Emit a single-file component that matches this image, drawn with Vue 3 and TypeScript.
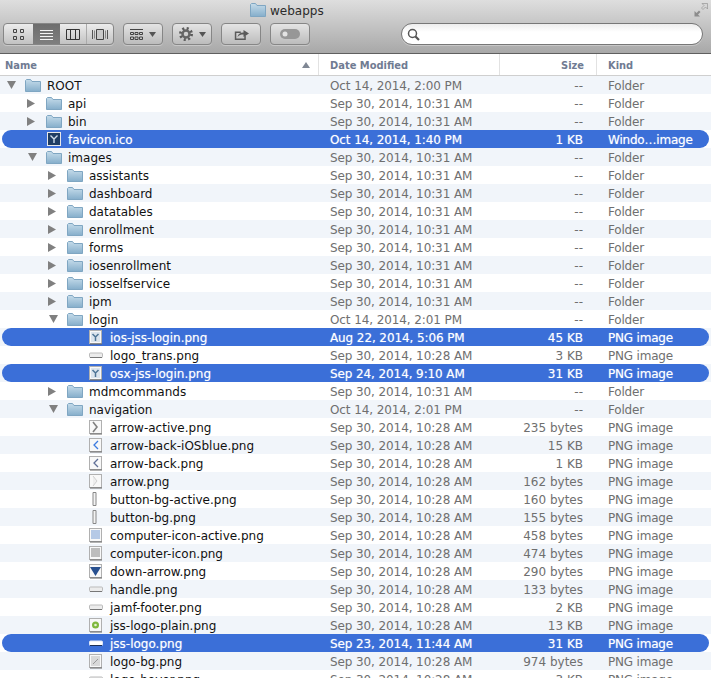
<script setup lang="ts">
interface Row {
  name: string;
  depth: number;
  icon: string;
  twisty?: "open" | "closed";
  date: string;
  size: string;
  kind: string;
  selected?: boolean;
}

const SEP31 = "Sep 30, 2014, 10:31 AM";
const SEP28 = "Sep 30, 2014, 10:28 AM";

const folder = (name: string, depth: number, twisty: "open" | "closed", date = SEP31): Row => ({
  name, depth, twisty, date, icon: "folder", size: "--", kind: "Folder",
});
const png = (name: string, icon: string, size: string, date = SEP28, selected = false): Row => ({
  name, depth: 3, icon, size, date, selected, kind: "PNG image",
});

const rows: Row[] = [
  folder("ROOT", 0, "open", "Oct 14, 2014, 2:00 PM"),
  folder("api", 1, "closed"),
  folder("bin", 1, "closed"),
  { name: "favicon.ico", depth: 1, icon: "favicon", date: "Oct 14, 2014, 1:40 PM", size: "1 KB", kind: "Windo…image", selected: true },
  folder("images", 1, "open"),
  folder("assistants", 2, "closed"),
  folder("dashboard", 2, "closed"),
  folder("datatables", 2, "closed"),
  folder("enrollment", 2, "closed"),
  folder("forms", 2, "closed"),
  folder("iosenrollment", 2, "closed"),
  folder("iosselfservice", 2, "closed"),
  folder("ipm", 2, "closed"),
  folder("login", 2, "open", "Oct 14, 2014, 2:01 PM"),
  png("ios-jss-login.png", "jss", "45 KB", "Aug 22, 2014, 5:06 PM", true),
  png("logo_trans.png", "bar", "3 KB"),
  png("osx-jss-login.png", "jss", "31 KB", "Sep 24, 2014, 9:10 AM", true),
  folder("mdmcommands", 2, "closed"),
  folder("navigation", 2, "open", "Oct 14, 2014, 2:01 PM"),
  png("arrow-active.png", "chevron", "235 bytes"),
  png("arrow-back-iOSblue.png", "backblue", "15 KB"),
  png("arrow-back.png", "back", "1 KB"),
  png("arrow.png", "paleArrow", "162 bytes"),
  png("button-bg-active.png", "thin", "160 bytes"),
  png("button-bg.png", "thin", "155 bytes"),
  png("computer-icon-active.png", "computerBlue", "458 bytes"),
  png("computer-icon.png", "computer", "474 bytes"),
  png("down-arrow.png", "downArrow", "290 bytes"),
  png("handle.png", "bar", "133 bytes"),
  png("jamf-footer.png", "bar", "2 KB"),
  png("jss-logo-plain.png", "green", "13 KB"),
  png("jss-logo.png", "bar", "31 KB", "Sep 23, 2014, 11:44 AM", true),
  png("logo-bg.png", "logoBg", "974 bytes"),
  png("logo-hover.png", "bar", "3 KB"),
];

const framed = ["jss", "chevron", "backblue", "back", "paleArrow", "computerBlue", "computer", "downArrow", "green", "logoBg"];
</script>

<template>
  <div class="finder">
    <svg class="defs" width="0" height="0">
      <defs>
        <linearGradient id="fold" x1="0" y1="0" x2="0" y2="1">
          <stop offset="0" stop-color="#c6dcea" />
          <stop offset="1" stop-color="#85aecb" />
        </linearGradient>
      </defs>
    </svg>

    <header class="toolbar">
      <div class="title-row">
        <svg width="16" height="14" viewBox="0 0 16 14">
          <path d="M.5 13.500V1.500l1-1h4l1.500 2h8.500v11z" fill="url(#fold)" stroke="#7fa6c2" />
        </svg>
        <span class="title">webapps</span>
        <svg class="expand" width="14" height="14" viewBox="0 0 14 14">
          <path d="M13.500.5H8l2 2-2.500 2.500 1.500 1.500L11.500 4l2 2z" fill="#d6d6d6" stroke="#8c8c8c" stroke-width=".6" />
          <path d="M.5 13.500H6l-2-2L6.500 9 5 7.500 2.500 10l-2-2z" fill="#8c8c8c" />
        </svg>
      </div>
      <div class="controls">
        <div class="segments">
          <button class="seg seg-icons">
            <svg width="11" height="11" viewBox="0 0 11 11" fill="none" stroke="#444">
              <path d="M.5.5h3v3h-3zM7.500.5h3v3h-3zM.5 7.500h3v3h-3zM7.500 7.500h3v3h-3z" />
            </svg>
          </button>
          <button class="seg seg-list">
            <svg width="13" height="11" viewBox="0 0 13 11" stroke="#f4f4f4">
              <path d="M0 1.500h13M0 4.500h13M0 7.500h13M0 10.500h13" />
            </svg>
          </button>
          <button class="seg seg-cols">
            <svg width="14" height="11" viewBox="0 0 14 11" fill="none" stroke="#333">
              <path d="M.5.5h13v10H.5zM4.500.5v10M9.500.5v10" />
            </svg>
          </button>
          <button class="seg seg-flow">
            <svg width="16" height="11" viewBox="0 0 16 11" fill="none">
              <path d="M.5 1v9M15.500 1v9" stroke="#555" />
              <path d="M2.500 1.500v8M13.500 1.500v8" stroke="#888" />
              <path d="M4.500.5h7v10h-7z" stroke="#444" fill="#c9c9c9" />
            </svg>
          </button>
        </div>
        <button class="btn">
          <svg width="13" height="11" viewBox="0 0 13 11" fill="none" stroke="#444">
            <path d="M0 .5h13" />
            <path d="M.5 3.500h3v2h-3zM5 3.500h3v2H5zM9.500 3.500h3v2h-3zM.5 8h3v2.500h-3zM5 8h3v2.500H5zM9.500 8h3v2.500h-3z" />
          </svg>
          <svg class="caret" width="7" height="5" viewBox="0 0 7 5"><path d="M0 0h7L3.500 5z" fill="#555" /></svg>
        </button>
        <button class="btn">
          <svg width="14" height="14" viewBox="0 0 14 14" fill="none">
            <circle cx="7" cy="7" r="5.500" stroke="#5c5c5c" stroke-width="3" stroke-dasharray="2 2.320" />
            <circle cx="7" cy="7" r="3.500" stroke="#666" stroke-width="2.500" />
          </svg>
          <svg class="caret" width="7" height="5" viewBox="0 0 7 5"><path d="M0 0h7L3.500 5z" fill="#555" /></svg>
        </button>
        <button class="btn">
          <svg width="15" height="12" viewBox="0 0 15 12">
            <path d="M.8 3.500h6v1.500H2.300v5.500h8V7.500h1.500v4.500H.8z" fill="#5a5a5a" />
            <path d="M3.500 9c.5-3 2.500-4.500 6-4.500V2L15 5.500 9.500 9V6.500C7 6.500 5 7 3.500 9z" fill="#5a5a5a" />
          </svg>
        </button>
        <button class="btn">
          <svg width="20" height="10" viewBox="0 0 20 10">
            <rect width="20" height="10" rx="5" fill="#979797" />
            <circle cx="5" cy="5" r="2.500" fill="#e3e3e3" />
          </svg>
        </button>
        <label class="search">
          <svg width="13" height="13" viewBox="0 0 13 13" fill="none" stroke="#555">
            <circle cx="5.500" cy="5.500" r="4" stroke-width="1.500" />
            <path d="M8.500 8.500l3.500 3.500" stroke-width="2.200" />
          </svg>
        </label>
      </div>
    </header>

    <div class="head">
      <div class="hcell col-name">
        <span>Name</span>
        <svg width="8" height="6" viewBox="0 0 8 6"><path d="M0 6h8L4 0z" fill="#7f8794" /></svg>
      </div>
      <div class="hcell col-date">Date Modified</div>
      <div class="hcell col-size">Size</div>
      <div class="hcell col-kind">Kind</div>
    </div>

    <div class="list">
      <div v-for="(r, i) in rows" :key="r.name" class="row" :class="{ odd: i % 2 === 0 }">
        <div class="pill" :class="{ selected: r.selected }">
          <div class="cell name-cell" :style="{ paddingLeft: 3 + r.depth * 21 + 'px' }">
            <span class="twisty">
              <svg v-if="r.twisty === 'closed'" width="8" height="9" viewBox="0 0 8 9"><path d="M0 0l8 4.500L0 9z" /></svg>
              <svg v-else-if="r.twisty === 'open'" class="down" width="9" height="8" viewBox="0 0 9 8"><path d="M0 0h9L4.500 8z" /></svg>
            </span>
            <svg class="ic" width="16" height="16" viewBox="0 0 16 16">
              <path v-if="r.icon === 'folder'" d="M.5 14.500V3.500l1-1h4l1.500 2h8.500v10z" fill="url(#fold)" stroke="#7fa6c2" />
              <template v-else-if="r.icon === 'favicon'">
                <rect x="1.500" y="1.500" width="13" height="13" fill="#1f3d63" stroke="#e8e8e8" />
                <path d="M4.500 4.500l3.500 3.500 3.500-3.500M8 8v4" fill="none" stroke="#cfdcea" stroke-width="1.400" />
              </template>
              <template v-else-if="framed.includes(r.icon)">
                <rect x="1.500" y="1.500" width="12" height="13" fill="#f8f8f8" stroke="#b0b0b0" />
                <path d="M2 15h12" stroke="#666" />
                <template v-if="r.icon === 'jss'">
                  <rect x="3" y="3" width="9" height="10" fill="#dbe4ed" />
                  <path d="M4.500 5l3 3 3-3M7.500 8v4" fill="none" stroke="#4f7596" stroke-width="1.500" />
                </template>
                <path v-else-if="r.icon === 'chevron'" d="M5 3l4 5-4 5" fill="none" stroke="#808080" stroke-width="1.600" />
                <path v-else-if="r.icon === 'backblue'" d="M10 4L6 8l4 4" fill="none" stroke="#3c7be0" stroke-width="1.300" />
                <path v-else-if="r.icon === 'back'" d="M10 4L6 8l4 4" fill="none" stroke="#5f6f96" stroke-width="1.300" />
                <path v-else-if="r.icon === 'paleArrow'" d="M5 3l4 5-4 5" fill="#eee" stroke="#d0d0d0" />
                <rect v-else-if="r.icon === 'computerBlue'" x="3" y="3" width="9" height="9" fill="#b5c9e6" />
                <rect v-else-if="r.icon === 'computer'" x="3" y="3" width="9" height="9" fill="#bdbdbd" />
                <path v-else-if="r.icon === 'downArrow'" d="M2 4h11L7.500 13z" fill="#28508f" />
                <template v-else-if="r.icon === 'green'">
                  <circle cx="7.500" cy="8" r="3.500" fill="#7fb83c" />
                  <circle cx="7.500" cy="8" r="1.300" fill="#e6f2d3" />
                </template>
                <template v-else>
                  <rect x="3" y="3" width="9" height="10" fill="#d9d9d9" />
                  <path d="M5 11l5-5" stroke="#9a9a9a" />
                </template>
              </template>
              <path v-else-if="r.icon === 'thin'" d="M5 1.500h3v13H5z" fill="#f3f3f3" stroke="#888" />
              <template v-else>
                <rect x="1.500" y="6" width="13" height="4.500" rx="1" :fill="r.selected ? '#fff' : '#ececec'" :stroke="r.selected ? '#dfe6f6' : '#bbb'" />
                <path d="M2 10.500h12" :stroke="r.selected ? '#1c2f55' : '#777'" />
              </template>
            </svg>
            <span class="label">{{ r.name }}</span>
          </div>
          <div class="cell col-date">{{ r.date }}</div>
          <div class="cell col-size">{{ r.size }}</div>
          <div class="cell col-kind">{{ r.kind }}</div>
        </div>
      </div>
    </div>
  </div>
</template>

<style scoped>
.finder { width: 711px; height: 678px; overflow: hidden; background: #fff; font-family: "DejaVu Sans", sans-serif; font-size: 12px; }
.defs { position: absolute; }
.toolbar { height: 54px; box-sizing: border-box; border-bottom: 1px solid #5f5f5f; background: linear-gradient(#dedede, #a8a8a8); }
.title-row { height: 23px; display: flex; align-items: center; padding: 0 3px 3px 250px; box-sizing: border-box; gap: 4px; }
.title { font-size: 12px; color: #2b2b2b; padding-top: 1px; }
.expand { margin-left: auto; }
.controls { display: flex; align-items: center; height: 22px; padding: 0 8px 0 3px; gap: 9px; }
.segments { display: flex; width: 111px; height: 22px; box-sizing: border-box; border: 1px solid #868686; border-radius: 4px; overflow: hidden; background: linear-gradient(#ececec, #c2c2c2); box-shadow: 0 1px 0 rgba(255, 255, 255, .3); }
.seg { display: flex; align-items: center; justify-content: center; padding: 0; border: 0; background: none; }
.seg-icons { width: 29px; }
.seg-list { width: 27px; background: linear-gradient(#6d6d6d, #7f7f7f); }
.seg-cols { width: 26px; }
.seg-flow { width: 27px; border-left: 1px solid #aaa; }
.btn { width: 40px; height: 22px; box-sizing: border-box; display: flex; align-items: center; justify-content: center; gap: 6px; padding: 0; border: 1px solid #868686; border-radius: 4px; background: linear-gradient(#e4e4e4, #bcbcbc); box-shadow: 0 1px 0 rgba(255, 255, 255, .3); }
.search { width: 302px; height: 22px; box-sizing: border-box; margin-left: auto; display: flex; align-items: center; padding-left: 5px; border: 1px solid #777; border-radius: 11px; background: linear-gradient(#ededed, #fff 40%); box-shadow: 0 1px 0 rgba(255, 255, 255, .3); }
.head { display: flex; height: 22px; box-sizing: border-box; border-bottom: 1px solid #cfcfcf; background: #fff; padding-left: 2px; }
.hcell { display: flex; align-items: center; padding-top: 1px; font-family: "DejaVu Sans Condensed", "DejaVu Sans", sans-serif; font-weight: bold; font-size: 11px; color: #707b92; border-right: 1px solid #e2e2e2; box-sizing: border-box; }
.hcell.col-name { padding-left: 3px; justify-content: space-between; padding-right: 8px; width: 317px; }
.hcell.col-kind { border-right: 0; }
.hcell.col-size { justify-content: flex-end; padding-right: 12px; }
.list { display: flex; flex-direction: column; }
.row { height: 18px; flex: none; padding: 0 2px; }
.row.odd { background: #f1f5fa; }
.pill { display: flex; height: 18px; line-height: 20px; border-radius: 9px; color: #6f6f6f; }
.pill.selected { background: #3b6fd8; color: #fff; text-shadow: 0 0 1px rgba(255, 255, 255, .55); }
.cell { white-space: nowrap; box-sizing: border-box; }
.name-cell { width: 317px; height: 18px; display: flex; align-items: center; color: #111; }
.selected .name-cell { color: #fff; }
.label { height: 18px; }
.twisty { width: 20px; flex: none; display: flex; align-items: center; padding-left: 1px; box-sizing: border-box; }
.twisty svg { fill: #808080; }
.twisty .down { margin-left: 1px; }
.ic { flex: none; margin-right: 6px; }
.col-date { width: 181px; padding-left: 11px; letter-spacing: -0.1px; }
.col-size { width: 97px; padding-right: 14px; text-align: right; }
.col-kind { padding-left: 11px; flex: 1; letter-spacing: -0.2px; }
.hcell.col-date, .hcell.col-kind { letter-spacing: 0; }
</style>
